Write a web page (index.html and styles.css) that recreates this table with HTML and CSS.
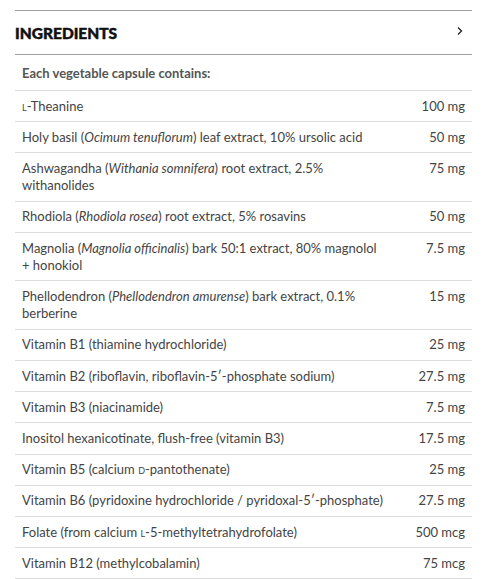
FILE: index.html
```html
<!DOCTYPE html>
<html>
<head>
<meta charset="utf-8">
<link rel="stylesheet" href="styles.css">
</head>
<body>
<section class="panel">
  <div class="head">
    <h2 class="title">INGREDIENTS</h2>
    <svg class="chev" width="8" height="10" viewBox="0 0 8 10"><path d="M2 1.5 L5.5 5 L2 8.5" fill="none" stroke="#222" stroke-width="1.3"/></svg>
  </div>
  <div class="sub">Each vegetable capsule contains:</div>
  <ul class="rows">
    <li class="row"><span class="name"><span class="sc">l</span>-Theanine</span><span class="amt">100 mg</span></li>
    <li class="row"><span class="name">Holy basil (<i>Ocimum tenuflorum</i>) leaf extract, 10% ursolic acid</span><span class="amt">50 mg</span></li>
    <li class="row"><span class="name">Ashwagandha (<i>Withania somnifera</i>) root extract, 2.5% withanolides</span><span class="amt">75 mg</span></li>
    <li class="row"><span class="name">Rhodiola (<i>Rhodiola rosea</i>) root extract, 5% rosavins</span><span class="amt">50 mg</span></li>
    <li class="row"><span class="name">Magnolia (<i>Magnolia officinalis</i>) bark 50:1 extract, 80% magnolol + honokiol</span><span class="amt">7.5 mg</span></li>
    <li class="row"><span class="name">Phellodendron (<i>Phellodendron amurense</i>) bark extract, 0.1% berberine</span><span class="amt">15 mg</span></li>
    <li class="row"><span class="name">Vitamin B1 (thiamine hydrochloride)</span><span class="amt">25 mg</span></li>
    <li class="row"><span class="name">Vitamin B2 (riboflavin, riboflavin-5′-phosphate sodium)</span><span class="amt">27.5 mg</span></li>
    <li class="row"><span class="name">Vitamin B3 (niacinamide)</span><span class="amt">7.5 mg</span></li>
    <li class="row"><span class="name">Inositol hexanicotinate, flush-free (vitamin B3)</span><span class="amt">17.5 mg</span></li>
    <li class="row"><span class="name">Vitamin B5 (calcium <span class="sc">d</span>-pantothenate)</span><span class="amt">25 mg</span></li>
    <li class="row"><span class="name">Vitamin B6 (pyridoxine hydrochloride / pyridoxal-5′-phosphate)</span><span class="amt">27.5 mg</span></li>
    <li class="row"><span class="name">Folate (from calcium <span class="sc">l</span>-5-methyltetrahydrofolate)</span><span class="amt">500 mcg</span></li>
    <li class="row"><span class="name">Vitamin B12 (methylcobalamin)</span><span class="amt">75 mcg</span></li>
  </ul>
</section>
</body>
</html>
```

FILE: styles.css
```css
html, body {
  margin: 0;
  padding: 0;
  background: #fff;
}
body {
  font-family: Lato, "Liberation Sans", sans-serif;
  font-size: 13px;
  color: #444;
}
.panel {
  margin: 10px 0 0 15px;
  width: 457px;
  border-top: 1px solid #a0a0a0;
}
.head {
  display: flex;
  align-items: center;
  justify-content: space-between;
  height: 43px;
  border-bottom: 1px solid #a0a0a0;
  padding-right: 8px;
}
.title {
  margin: 0;
  font-size: 15.5px;
  font-weight: 900;
  color: #111;
  -webkit-text-stroke: 0.45px #111;
}
.chev {
  display: block;
  margin-top: -4px;
}
.sub {
  padding: 10px 7px 9px;
  line-height: 16px;
  font-weight: 700;
  color: #555;
  border-bottom: 1px solid #ddd;
}
.rows {
  list-style: none;
  margin: 0;
  padding: 0;
}
.row {
  display: flex;
  justify-content: space-between;
  padding: 6.5px 7px;
  line-height: 17.2px;
  border-bottom: 1px solid #ddd;
}
.name {
  width: 364px;
}
.amt {
  text-align: right;
  white-space: nowrap;
}
.sc {
  font-variant: small-caps;
}
```
